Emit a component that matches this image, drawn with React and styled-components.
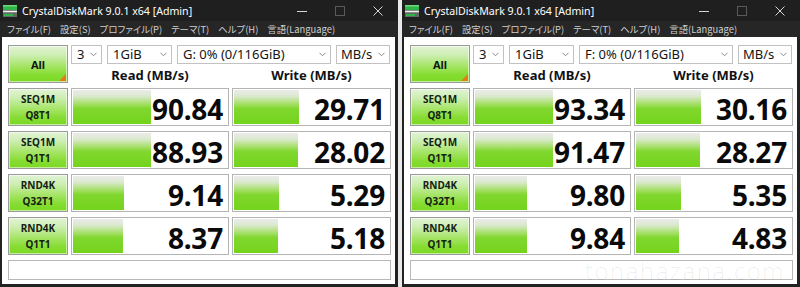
import React from 'react';
import styled, { createGlobalStyle } from 'styled-components';

const Global = createGlobalStyle`
  html, body { margin: 0; padding: 0; background: #e9e9e9; }
  body { font-family: "Noto Sans", "Noto Sans CJK JP", sans-serif; }
  #root { width: 800px; height: 287px; }
`;

const Desktop = styled.div`
  position: relative;
  display: flex;
  gap: 4px;
  width: 800px;
  height: 287px;
  overflow: hidden;
  background: #e9e9e9;
`;

const Window = styled.div`
  width: 398px;
  height: 287px;
  display: flex;
  flex-direction: column;
  background: #222222;
  box-sizing: border-box;
`;

const TitleBar = styled.div`
  height: 21px;
  display: flex;
  align-items: center;
  padding-left: 3px;
  background: #1f1f1f;
`;

const TitleText = styled.span`
  margin-left: 5px;
  color: #ffffff;
  font-size: 10.6px;
  white-space: nowrap;
`;

const Controls = styled.div`
  margin-left: auto;
  margin-right: 1px;
  display: flex;
  height: 100%;
`;

const ControlButton = styled.div`
  width: 38px;
  height: 100%;
  display: flex;
  align-items: center;
  justify-content: center;
  color: ${p => (p.$disabled ? '#5a5a5a' : '#d6d6d6')};
`;

const MenuBar = styled.div`
  height: 16px;
  display: flex;
  align-items: center;
  gap: 9px;
  padding-left: 7px;
  background: #262626;
`;

const MenuItem = styled.span`
  color: #cfcfcf;
  font-family: "Noto Sans CJK JP", "Noto Sans", sans-serif;
  font-feature-settings: "palt";
  font-size: 9.4px;
  white-space: nowrap;
`;

const Client = styled.div`
  flex: 1;
  margin: 0 3px 3px 2px;
  background: #ffffff;
  padding: 8px 0 0 6px;
  box-sizing: border-box;
`;

const Grid = styled.div`
  display: grid;
  grid-template-columns: 60px 158px 159px;
  grid-template-rows: 38px 38px 38px 38px 38px 20px;
  column-gap: 3px;
  row-gap: 5px;
`;

const greenFace = `linear-gradient(180deg, #e2f3d6 0%, #cdeeb2 25%, #a6e568 55%, #86dc32 80%, #7bd924 100%)`;

const AllButton = styled.div`
  position: relative;
  display: flex;
  align-items: center;
  justify-content: center;
  border: 1px solid #9a9a9a;
  box-shadow: inset 0 0 0 1px rgba(255, 255, 255, 0.55);
  background: ${greenFace};
  font-weight: 700;
  font-size: 11px;
  color: #101810;
  box-sizing: border-box;
  &::after {
    content: '';
    position: absolute;
    right: 1px;
    bottom: 1px;
    width: 0;
    height: 0;
    border-style: solid;
    border-width: 0 0 7px 7px;
    border-color: transparent transparent #e8781e transparent;
  }
`;

const TopRight = styled.div`
  grid-column: 2 / 4;
  display: flex;
  flex-direction: column;
`;

const ComboRow = styled.div`
  display: flex;
  gap: 5px;
  height: 19px;
`;

const Combo = styled.div`
  width: ${p => p.$w}px;
  height: 19px;
  box-sizing: border-box;
  border: 1px solid #c2c2c2;
  display: flex;
  align-items: center;
  padding-left: ${p => p.$pad ?? 5}px;
  font-size: 13px;
  color: #141414;
  background: #fff;
`;

const ComboText = styled.span`
  flex: 1;
  white-space: nowrap;
  line-height: 17px;
`;

const ChevronIcon = styled.svg`
  margin-right: 4px;
  flex: none;
`;

const HeaderRow = styled.div`
  height: 19px;
  box-sizing: border-box;
  padding-top: 4px;
  display: grid;
  grid-template-columns: 158px 159px;
  column-gap: 3px;
  align-items: start;
`;

const Header = styled.div`
  text-align: center;
  font-weight: 700;
  font-size: 13px;
  line-height: 15px;
  color: #111;
`;

const Label = styled.div`
  display: flex;
  flex-direction: column;
  align-items: center;
  justify-content: center;
  border: 1px solid #9a9a9a;
  box-shadow: inset 0 0 0 1px rgba(255, 255, 255, 0.55);
  background: ${greenFace};
  font-weight: 700;
  font-size: 10px;
  line-height: 16px;
  color: #142214;
  box-sizing: border-box;
`;

const Cell = styled.div`
  display: grid;
  border: 1px solid #b4b4b4;
  box-sizing: border-box;
  padding: 1px;
  background: #fff;
  overflow: hidden;
`;

const Bar = styled.div`
  grid-area: 1 / 1;
  justify-self: start;
  height: 100%;
  background: linear-gradient(180deg, #ebebea 0%, #dbe9cf 18%, #a8e06c 40%, #80d72e 55%, #74d41c 100%);
`;

const Value = styled.div`
  grid-area: 1 / 1;
  justify-self: end;
  align-self: center;
  padding: 3px 4px 0 0;
  font-weight: 700;
  font-size: 28px;
  line-height: 30px;
  color: #0a0a0a;
  letter-spacing: -0.2px;
`;

const StatusBar = styled.div`
  grid-column: 1 / 4;
  border: 1px solid #b8b8b8;
  background: #fff;
  box-sizing: border-box;
`;

const Watermark = styled.div`
  position: absolute;
  left: 585px;
  top: 259px;
  font-family: "Open Sans", "Noto Sans", sans-serif;
  font-weight: 300;
  font-size: 24px;
  line-height: 24px;
  letter-spacing: 1.5px;
  color: rgba(0, 0, 0, 0.07);
  pointer-events: none;
  white-space: nowrap;
`;

const Chevron = () => (
  <ChevronIcon width="7" height="5" viewBox="0 0 7 5">
    <path d="M0.5 0.8 L3.5 3.8 L6.5 0.8" fill="none" stroke="#8a8a8a" strokeWidth="1" />
  </ChevronIcon>
);

const AppIcon = () => (
  <svg width="14" height="14" viewBox="0 0 14 14">
    <rect x="0" y="1" width="14" height="5" fill="#2fb54a" />
    <rect x="0" y="1" width="14" height="1.5" fill="#6fdc7c" />
    <rect x="0" y="6.5" width="14" height="2" fill="#f2f2f2" />
    <rect x="0" y="9" width="14" height="4" fill="#5d6b60" />
    <rect x="1" y="10" width="9" height="2" fill="#33b24c" />
  </svg>
);

const menu = ['ファイル(F)', '設定(S)', 'プロファイル(P)', 'テーマ(T)', 'ヘルプ(H)', '言語(Language)'];

const barWidth = v => Math.round(25 + 27 * Math.log10(v));

const DiskWindow = ({ drive, rows }) => (
  <Window>
    <TitleBar>
      <AppIcon />
      <TitleText>CrystalDiskMark 9.0.1 x64 [Admin]</TitleText>
      <Controls>
        <ControlButton>
          <svg width="10" height="10" viewBox="0 0 10 10">
            <path d="M0 5.5 H10" stroke="currentColor" strokeWidth="1" />
          </svg>
        </ControlButton>
        <ControlButton $disabled>
          <svg width="10" height="10" viewBox="0 0 10 10">
            <rect x="0.5" y="0.5" width="9" height="9" fill="none" stroke="currentColor" strokeWidth="1" />
          </svg>
        </ControlButton>
        <ControlButton>
          <svg width="10" height="10" viewBox="0 0 10 10">
            <path d="M0.5 0.5 L9.5 9.5 M9.5 0.5 L0.5 9.5" stroke="currentColor" strokeWidth="1" />
          </svg>
        </ControlButton>
      </Controls>
    </TitleBar>
    <MenuBar>
      {menu.map(m => (
        <MenuItem key={m}>{m}</MenuItem>
      ))}
    </MenuBar>
    <Client>
      <Grid>
        <AllButton>All</AllButton>
        <TopRight>
          <ComboRow>
            <Combo $w={31}>
              <ComboText>3</ComboText>
              <Chevron />
            </Combo>
            <Combo $w={65}>
              <ComboText>1GiB</ComboText>
              <Chevron />
            </Combo>
            <Combo $w={154}>
              <ComboText>{drive}</ComboText>
              <Chevron />
            </Combo>
            <Combo $w={54} $pad={4}>
              <ComboText>MB/s</ComboText>
              <Chevron />
            </Combo>
          </ComboRow>
          <HeaderRow>
            <Header>Read (MB/s)</Header>
            <Header>Write (MB/s)</Header>
          </HeaderRow>
        </TopRight>
        {rows.map(([a, b, r, w]) => (
          <React.Fragment key={a + b}>
            <Label>
              <span>{a}</span>
              <span>{b}</span>
            </Label>
            <Cell>
              <Bar style={{ width: barWidth(r) }} />
              <Value>{r.toFixed(2)}</Value>
            </Cell>
            <Cell>
              <Bar style={{ width: barWidth(w) }} />
              <Value>{w.toFixed(2)}</Value>
            </Cell>
          </React.Fragment>
        ))}
        <StatusBar />
      </Grid>
    </Client>
  </Window>
);

const leftRows = [
  ['SEQ1M', 'Q8T1', 90.84, 29.71],
  ['SEQ1M', 'Q1T1', 88.93, 28.02],
  ['RND4K', 'Q32T1', 9.14, 5.29],
  ['RND4K', 'Q1T1', 8.37, 5.18],
];

const rightRows = [
  ['SEQ1M', 'Q8T1', 93.34, 30.16],
  ['SEQ1M', 'Q1T1', 91.47, 28.27],
  ['RND4K', 'Q32T1', 9.8, 5.35],
  ['RND4K', 'Q1T1', 9.84, 4.83],
];

export default function App() {
  return (
    <>
      <Global />
      <Desktop>
        <DiskWindow drive="G: 0% (0/116GiB)" rows={leftRows} />
        <DiskWindow drive="F: 0% (0/116GiB)" rows={rightRows} />
        <Watermark>tonahazana.com</Watermark>
      </Desktop>
    </>
  );
}
